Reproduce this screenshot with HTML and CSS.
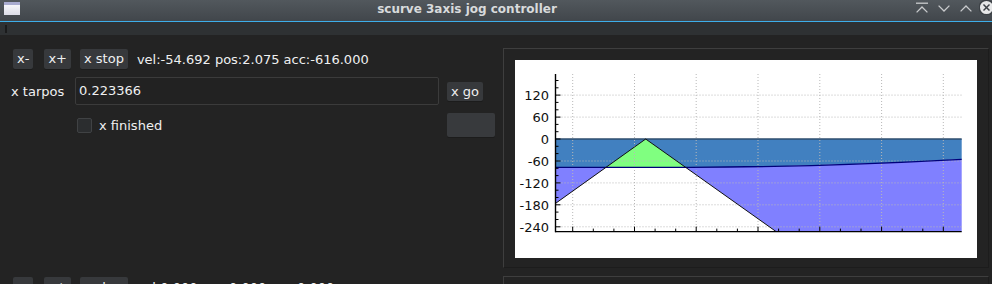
FILE: index.html
```html
<!DOCTYPE html>
<html>
<head>
<meta charset="utf-8">
<title>scurve 3axis jog controller</title>
<link rel="stylesheet" href="styles.css">
</head>
<body>
<div class="window">
  <header class="titlebar">
    <div class="app-icon"></div>
    <div class="title">scurve 3axis jog controller</div>
    <div class="wm-buttons">
      <svg class="wm wm-above" width="12" height="11" viewBox="0 0 12 11"><line x1="0" y1="1.2" x2="12" y2="1.2"/><polyline points="0.6,10.4 6,5 11.4,10.4"/></svg>
      <svg class="wm wm-min" width="12" height="7" viewBox="0 0 12 7"><polyline points="0.6,0.6 6,6 11.4,0.6"/></svg>
      <svg class="wm wm-max" width="12" height="7" viewBox="0 0 12 7"><polyline points="0.6,6.4 6,1 11.4,6.4"/></svg>
      <svg class="wm-close" width="15" height="15" viewBox="0 0 15 15"><circle cx="7.5" cy="7.5" r="7.3" fill="#e6e7e8"/><line x1="4.5" y1="4.5" x2="10.5" y2="10.5"/><line x1="10.5" y1="4.5" x2="4.5" y2="10.5"/></svg>
    </div>
  </header>
  <div class="toolbar"><span class="handle"></span></div>
  <main class="content">
    <section class="axis">
      <div class="controls">
        <div class="row row-jog">
          <button class="btn btn-first">x-</button>
          <button class="btn btn-second">x+</button>
          <button class="btn btn-stop">x stop</button>
          <span class="status">vel:-54.692 pos:2.075 acc:-616.000</span>
        </div>
        <div class="row row-target">
          <span class="lbl">x tarpos</span>
          <div class="input">0.223366</div>
          <button class="btn btn-go">x go</button>
        </div>
        <div class="row row-finished">
          <span class="check"></span>
          <span class="check-label">x finished</span>
          <button class="btn btn-blank"></button>
        </div>
      </div>
      <div class="plot-frame">
        <svg class="plot" width="462" height="198" viewBox="0 0 462 198">
          <rect width="462" height="198" fill="#ffffff"/>
          <path d="M40.5,79 L446.7,79 L446.7,99.3 C360,104 260,107 175,107.3 L40.5,107.3 Z" fill="#4180c0"/>
          <path d="M40.5,107.3 L91.3,107.3 L40.5,143.4 Z" fill="#8080ff"/>
          <path d="M170.5,107.3 L175,107.3 C260,107 360,104 446.7,99.3 L446.7,171.5 L261,171.5 Z" fill="#8080ff"/>
          <path d="M91.3,107.3 L130.7,79 L170.5,107.3 Z" fill="#80ff80"/>
          <g class="grid">
            <line x1="40.5" y1="35.1" x2="446.7" y2="35.1"/>
            <line x1="40.5" y1="57.1" x2="446.7" y2="57.1"/>
            <line x1="40.5" y1="101" x2="446.7" y2="101"/>
            <line x1="40.5" y1="122.9" x2="446.7" y2="122.9"/>
            <line x1="40.5" y1="144.8" x2="446.7" y2="144.8"/>
            <line x1="40.5" y1="166.8" x2="446.7" y2="166.8"/>
            <line x1="57.7" y1="14" x2="57.7" y2="171"/>
            <line x1="119.5" y1="14" x2="119.5" y2="171"/>
            <line x1="181.2" y1="14" x2="181.2" y2="171"/>
            <line x1="243" y1="14" x2="243" y2="171"/>
            <line x1="304.8" y1="14" x2="304.8" y2="171"/>
            <line x1="366.6" y1="14" x2="366.6" y2="171"/>
            <line x1="428.3" y1="14" x2="428.3" y2="171"/>
          </g>
          <line x1="40.5" y1="79" x2="446.7" y2="79" stroke="#2e4d6c" stroke-width="1.6"/>
          <path d="M40.5,107.3 L175,107.3 C260,107 360,104 446.7,99.3" fill="none" stroke="#00007a" stroke-width="1.3"/>
          <path d="M40.5,143.4 L130.7,79 L261,171.5" fill="none" stroke="#111111" stroke-width="1"/>
          <g class="axes">
            <line x1="40.5" y1="14" x2="40.5" y2="172.2"/>
            <line x1="40" y1="171.6" x2="446.7" y2="171.6"/>
          </g>
          <g class="ticks">
            <path d="M40.5,35.1h5M40.5,57.1h5M40.5,79h5M40.5,101h5M40.5,122.9h5M40.5,144.8h5M40.5,166.8h5"/>
            <path d="M40.5,20.5h3M40.5,27.8h3M40.5,42.4h3M40.5,49.8h3M40.5,64.4h3M40.5,71.7h3M40.5,86.3h3M40.5,93.6h3M40.5,108.3h3M40.5,115.6h3M40.5,130.2h3M40.5,137.5h3M40.5,152.1h3M40.5,159.5h3"/>
            <path d="M57.7,171.6v-5M119.5,171.6v-5M181.2,171.6v-5M243,171.6v-5M304.8,171.6v-5M366.6,171.6v-5M428.3,171.6v-5"/>
            <path d="M78.3,171.6v-3M98.9,171.6v-3M140.1,171.6v-3M160.7,171.6v-3M201.8,171.6v-3M222.4,171.6v-3M263.6,171.6v-3M284.2,171.6v-3M325.4,171.6v-3M346,171.6v-3M387.2,171.6v-3M407.8,171.6v-3"/>
          </g>
          <g class="labels">
            <text x="34" y="39.8">120</text>
            <text x="34" y="61.8">60</text>
            <text x="34" y="83.7">0</text>
            <text x="34" y="105.7">-60</text>
            <text x="34" y="127.6">-120</text>
            <text x="34" y="149.5">-180</text>
            <text x="34" y="171.5">-240</text>
          </g>
        </svg>
      </div>
    </section>
    <section class="axis">
      <div class="controls">
        <div class="row row-jog">
          <button class="btn btn-first">y-</button>
          <button class="btn btn-second">y+</button>
          <button class="btn btn-stop">y stop</button>
          <span class="status">vel:0.000 pos:0.000 acc:0.000</span>
        </div>
      </div>
      <div class="plot-frame"></div>
    </section>
  </main>
</div>
</body>
</html>
```

FILE: styles.css
```css
html, body {
  margin: 0;
  padding: 0;
}

body {
  background: #232323;
  color: #eff0f1;
  font-family: "DejaVu Sans", "Noto Sans", sans-serif;
  font-size: 13px;
  height: 284px;
  overflow: hidden;
}

.window {
  width: 992px;
}

/* title bar */
.titlebar {
  display: flex;
  align-items: flex-start;
  height: 21px;
  background: linear-gradient(#52585d, #41464b);
  border-bottom: 1px solid #3daee9;
  overflow: hidden;
}

.app-icon {
  width: 16px;
  height: 10px;
  margin: 2px 4px 0 4px;
  border-top: 3px solid #a9acd0;
  background: linear-gradient(#f6f6fa, #dcdde8);
  flex: none;
}

.title {
  flex: 1;
  text-align: center;
  font-weight: bold;
  font-size: 12px;
  line-height: 18px;
  color: #d8dadc;
  white-space: nowrap;
}

.wm-buttons {
  width: 76px;
  display: flex;
  align-items: flex-start;
  padding-left: 6px;
  flex: none;
}

.wm {
  fill: none;
  stroke: #c9cbcd;
  stroke-width: 1.3;
  flex: none;
}

.wm-above {
  margin-top: 2px;
}

.wm-min {
  margin-top: 5px;
  margin-left: 10px;
}

.wm-max {
  margin-top: 5px;
  margin-left: 10px;
}

.wm-close {
  margin-left: 7px;
  margin-top: 0;
  flex: none;
  stroke: #3c4146;
  stroke-width: 1.5;
}

/* toolbar strip */
.toolbar {
  height: 13px;
  background: #2e3133;
  display: flex;
  align-items: flex-start;
  padding-left: 5px;
}

.handle {
  width: 2px;
  height: 8px;
  margin-top: 3px;
  background: #1a1b1c;
}

/* main content */
.content {
  display: flex;
  flex-direction: column;
  gap: 8px;
  padding-top: 13px;
}

.axis {
  display: flex;
  height: 220px;
  flex: none;
}

.controls {
  width: 503px;
  padding-top: 1px;
  flex: none;
}

.row {
  display: flex;
  align-items: center;
  white-space: nowrap;
}

.btn {
  font-family: inherit;
  font-size: 13px;
  color: #eff0f1;
  background: #37393c;
  border: none;
  border-radius: 2px;
  box-shadow: 0 1px 0 #1c1c1c;
  padding: 0 4px;
  margin: 0;
  line-height: 20px;
  white-space: nowrap;
}

.row-jog {
  height: 20px;
}

.row-jog .btn {
  height: 20px;
}

.btn-first {
  margin-left: 13px;
}

.btn-second {
  margin-left: 11px;
}

.btn-stop {
  margin-left: 9px;
}

.status {
  margin-left: 9px;
}

.row-target {
  margin-top: 8px;
  height: 28px;
}

.lbl {
  width: 75px;
  box-sizing: border-box;
  padding-left: 11px;
  flex: none;
  white-space: nowrap;
}

.input {
  width: 364px;
  height: 28px;
  box-sizing: border-box;
  border: 1px solid #3b3b3b;
  border-radius: 2px;
  background: #222222;
  padding-left: 3px;
  line-height: 26px;
  flex: none;
}

.btn-go {
  margin-left: 8px;
  height: 19px;
  line-height: 19px;
}

.row-finished {
  margin-top: 8px;
  height: 24px;
  padding-right: 8px;
}

.check {
  width: 15px;
  height: 15px;
  box-sizing: border-box;
  margin-left: 77px;
  border: 1px solid #404244;
  border-radius: 2px;
  background: #2b2d2f;
  flex: none;
}

.check-label {
  margin-left: 7px;
}

.btn-blank {
  margin-left: auto;
  width: 48px;
  height: 24px;
  background: #383a3d;
}

/* plot frame */
.plot-frame {
  width: 486px;
  height: 220px;
  box-sizing: border-box;
  border: 1px solid;
  border-color: #3e3e3e #1c1c1c #1c1c1c #3e3e3e;
  padding: 11px 11px 9px 11px;
  flex: none;
}

.plot {
  display: block;
}

.grid line {
  stroke: #b8b8b8;
  stroke-width: 1;
  stroke-dasharray: 1 2;
}

.axes line {
  stroke: #000000;
  stroke-width: 1.4;
}

.ticks path {
  stroke: #000000;
  stroke-width: 1;
  fill: none;
}

.labels text {
  font-family: "DejaVu Sans", sans-serif;
  font-size: 13px;
  fill: #111111;
  text-anchor: end;
}
```
